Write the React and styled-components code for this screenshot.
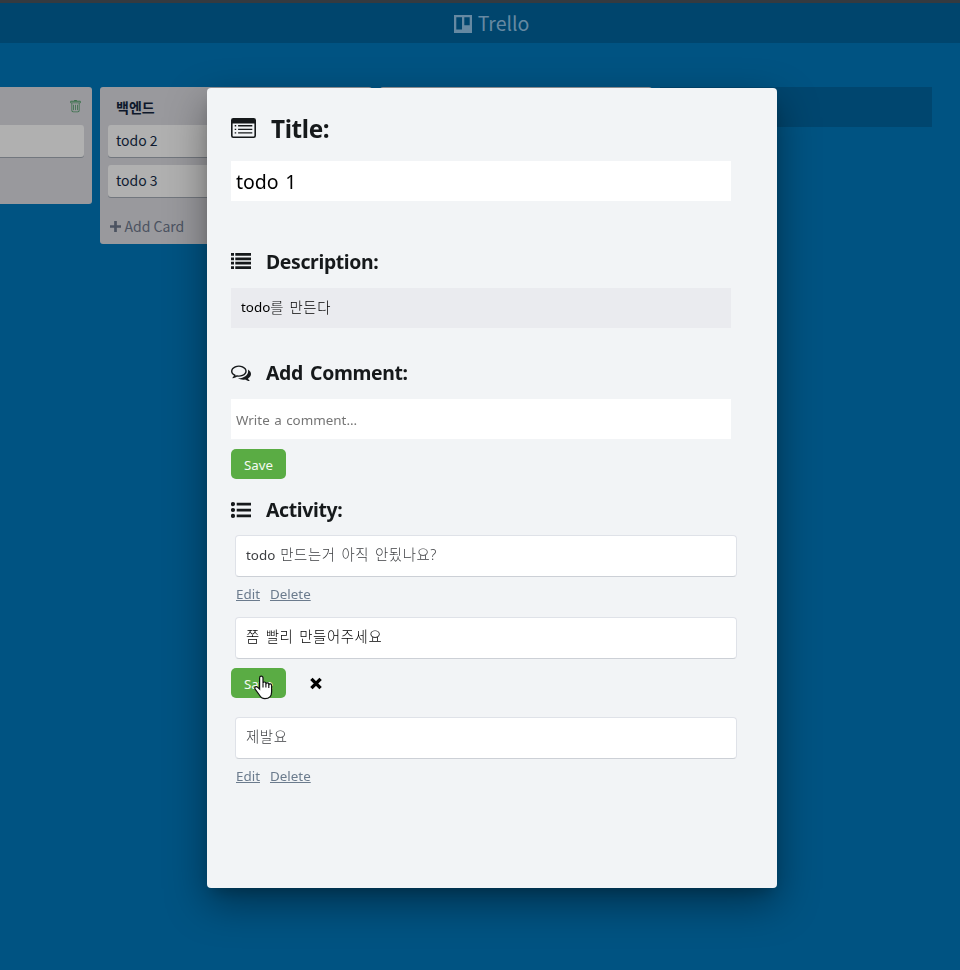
import React from "react";
import styled, { createGlobalStyle } from "styled-components";
import { BsTrash } from "react-icons/bs";

const GlobalStyle = createGlobalStyle`
  * { box-sizing: border-box; }
  html, body { margin: 0; height: 100%; }
  body {
    background: #005382;
    overflow: hidden;
    font-family: "Noto Sans CJK KR", sans-serif;
  }
  button, input { font: inherit; }
`;

const Page = styled.div`
  height: 970px;
  overflow: hidden;
  background: #005382;
  border-top: 3px solid #343a40;
`;

const TopBar = styled.header`
  height: 40px;
  display: flex;
  align-items: center;
  justify-content: center;
  gap: 6px;
  padding: 1px 0 0 23px;
  background: #00456d;
  color: #6689a2;
`;

const Brand = styled.span`
  font: 400 19.5px/22px "Noto Sans CJK KR", sans-serif;
  padding-bottom: 1px;
`;

const Board = styled.main`
  display: flex;
  align-items: flex-start;
  gap: 8px;
  margin: 44px 0 0 -180px;
`;

const List = styled.section`
  flex: 0 0 272px;
  padding: 8px;
  border-radius: 3px;
  background: #99999d;
`;

const ListHeader = styled.div`
  display: flex;
  align-items: center;
  justify-content: space-between;
  height: 30px;
  padding: 0 2px 8px 8px;
  font-size: 14px;
  color: #0e182b;
  svg { margin-top: 1px; color: #39704a; }
`;

const ListTitle = styled.span`
  font-weight: 700;
  line-height: 22px;
  padding-top: 2px;
`;

const Card = styled.div`
  height: 32px;
  margin-bottom: 8px;
  padding: 0 8px;
  border-radius: 3px;
  background: #b0b0b0;
  box-shadow: 0 1px 0 #72777e;
  color: #0f1b31;
  font-size: 14px;
  line-height: 30px;
`;

const AddCard = styled.div`
  display: flex;
  align-items: center;
  gap: 3.5px;
  height: 31px;
  padding: 11px 2px 0;
  color: #4c5361;
  font-size: 14px;
  line-height: 20px;
`;

const AddList = styled.div`
  flex: 0 0 272px;
  height: 40px;
  background: #00466f;
`;

const Overlay = styled.div`
  position: fixed;
  inset: 0;
  display: flex;
  align-items: flex-start;
  padding: 88px 0 0 207px;
`;

const Modal = styled.div`
  width: 570px;
  height: 800px;
  padding: 24px;
  border-radius: 4px;
  background: #f2f4f6;
  box-shadow: 0 15px 42px rgba(0, 0, 0, 0.4), 0 8px 14px -5px rgba(0, 0, 0, 0.2);
  color: #16191b;
  font-family: "Noto Sans", "Noto Sans CJK KR", sans-serif;
`;

const Heading = styled.h2`
  display: flex;
  align-items: center;
  gap: 15px;
  height: ${(p) => p.$height || 26}px;
  margin: ${(p) => p.$top || 0}px 0 0;
  font-size: ${(p) => p.$size || 19.4}px;
  font-weight: 700;
  letter-spacing: -0.35px;
  line-height: 26px;
  word-spacing: 2.5px;
  svg { flex: none; }
`;

const HeadingText = styled.span`
  padding-top: ${(p) => p.$drop || 0}px;
`;

const Field = styled.div`
  display: flex;
  align-items: center;
  width: 500px;
  height: 40px;
  margin-top: ${(p) => p.$top}px;
  padding: ${(p) => p.$drop || 0}px ${(p) => p.$pad || 5}px ${(p) => p.$lift || 0}px;
  background: ${(p) => p.$bg || "#fff"};
  color: ${(p) => p.$color || "#000"};
  font-size: ${(p) => p.$size || 13.4}px;
  white-space: pre;
  word-spacing: ${(p) => p.$word || 1}px;
`;

const Hangul = styled.span`
  font-size: 14.4px;
  font-weight: 300;
  letter-spacing: 0.6px;
`;

const SaveButton = styled.button`
  width: 55px;
  height: 30px;
  padding: 2px 0 0;
  border: 0;
  border-radius: 5px;
  background: #5aac44;
  color: #f4faf2;
  font-size: 13.3px;
  line-height: 20px;
`;

const SaveRow = styled.div`
  position: relative;
  display: flex;
  align-items: center;
  gap: 24px;
  height: 30px;
  margin-top: ${(p) => p.$top}px;
`;

const Cursor = styled.svg`
  position: absolute;
  left: 23px;
  top: 7px;
`;

const Comment = styled.div`
  width: 502px;
  height: 42px;
  margin: ${(p) => p.$top}px 0 0 4px;
  padding: 0 10px;
  border: 1px solid #dfe2e8;
  border-bottom-color: #ccd0d6;
  border-radius: 4px;
  background: #fff;
  color: ${(p) => (p.$active ? "#000" : "#3c3e41")};
  font-size: 13.4px;
  line-height: 37px;
  word-spacing: 1.5px;
`;

const Links = styled.div`
  display: flex;
  gap: 10px;
  margin: 7px 0 0 5px;
  height: 20px;
  color: #6b7b8d;
  font-size: 13.4px;
  line-height: 20px;
  text-decoration: underline;
`;

const TrelloIcon = () => (
  <svg width="18" height="18" viewBox="0 0 18 18">
    <path fill="currentColor" fillRule="evenodd" d="M0 0h18v18H0zM2.3 2.3v12.2h5.7v-12.2zM10.3 2.3v8h5.4V2.3z" />
  </svg>
);

const PlusIcon = () => (
  <svg width="11" height="11" viewBox="0 0 11 11">
    <path d="M5.5 0v11M0 5.5h11" stroke="currentColor" strokeWidth="2.7" />
  </svg>
);

const CardIcon = () => (
  <svg width="25" height="20" viewBox="0 0 25 20">
    <path
      fill="currentColor"
      fillRule="evenodd"
      d="M2.3 0h20.4A2.3 2.3 0 0 1 25 2.3v15.4a2.3 2.3 0 0 1-2.3 2.3H2.3A2.3 2.3 0 0 1 0 17.7V2.3A2.3 2.3 0 0 1 2.3 0zM1.6 5.4v12c0 .6.4 1 1 1h19.8c.6 0 1-.4 1-1v-12z"
    />
    <path fill="currentColor" d="M3.7 7.1h1.5v1.4H3.7zM3.7 10.7h1.5v1.4H3.7zM3.7 14.2h1.5v1.4H3.7zM7.1 7.1h14.2v1.4H7.1zM7.1 10.7h14.2v1.4H7.1zM7.1 14.2h14.2v1.4H7.1z" />
  </svg>
);

const ListIcon = () => (
  <svg width="20" height="16" viewBox="0 0 20 16">
    <path fill="currentColor" d="M0 0h3v2.8H0zM0 4.4h3v2.8H0zM0 8.8h3v2.8H0zM0 13.2h3V16H0zM4.3 0H20v2.8H4.3zM4.3 4.4H20v2.8H4.3zM4.3 8.8H20v2.8H4.3zM4.3 13.2H20V16H4.3z" />
  </svg>
);

const BulletsIcon = () => (
  <svg width="20" height="16" viewBox="0 0 20 16">
    <circle cx="2" cy="2.1" r="2.1" fill="currentColor" />
    <circle cx="2" cy="8" r="2.1" fill="currentColor" />
    <circle cx="2" cy="13.9" r="2.1" fill="currentColor" />
    <path fill="currentColor" d="M5.7.8H20v2.7H5.7zM5.7 6.7H20v2.7H5.7zM5.7 12.5H20v2.7H5.7z" />
  </svg>
);

const CommentsIcon = () => (
  <svg width="20" height="16" viewBox="0 0 1792 1434">
    <path
      transform="translate(0 -90)"
      fill="currentColor"
      d="M704 256q-153 0-286 52t-211.500 141T128 640q0 82 53 158t149 132l97 56-35 84q34-20 62-39l44-31 53 10q78 14 153 14 153 0 286-52t211.500-141T1280 640t-78.500-191T990 308t-286-52zm0-128q191 0 353.500 68.500T1314 383t94 257-94 257-256.500 186.500T704 1152q-86 0-176-16-124 88-278 128-36 9-86 16h-3q-11 0-20.500-8t-11.500-21q-1-3-1-6.500t.5-6.500 2-6l2.500-5 3.500-5.500 4-5 4.500-5 4-4.500q5-6 23-25t26-29.500 22.500-29 25-38.500 20.500-44q-124-72-195-177T0 640q0-139 94-257t256.500-186.500T704 128zm822 1169q10 24 20.500 44t25 38.500 22.500 29 26 29.500 23 25q1 1 4 4.500t4.500 5 4 5 3.500 5.500l2.500 5 2 6 .5 6.500-1 6.500q-3 14-13 22t-22 7q-50-7-86-16-154-40-278-128-90 16-176 16-271 0-472-132 58 4 88 4 161 0 309-45t264-129q125-92 192-212t67-254q0-77-23-152 129 71 204 178t75 230q0 120-71 224.500T1526 1297z"
    />
  </svg>
);

const CloseIcon = () => (
  <svg width="12" height="13" viewBox="0 0 12 13">
    <path d="M1.4 1.900l9.200 9.200M10.6 1.900l-9.200 9.200" stroke="#000" strokeWidth="3.400" />
  </svg>
);

const HandCursor = () => (
  <Cursor width="20" height="25" viewBox="0 0 20 25">
    <path
      d="M7.3 1.200c-1 0-1.700.7-1.700 1.700v11.200L3.7 12.300c-.8-.8-1.900-.8-2.500-.2-.6.600-.5 1.500.1 2.300l3.900 5.300c1.400 2.600 3 3.900 5.700 3.900 4.400 0 6.700-2.800 6.700-6.700V10.400c0-1-.6-1.500-1.400-1.500s-1.400.5-1.400 1.300v-.8c0-1-.6-1.600-1.400-1.600s-1.500.6-1.500 1.400v-.6c0-1-.6-1.600-1.400-1.600S9 7.600 9 8.600V2.900c0-1-.7-1.700-1.700-1.700z"
      fill="#fff"
      stroke="#111"
      strokeWidth="1.200"
    />
    <path d="M9 8.400v4.200M11.900 9v3.600M14.8 10v3" stroke="#111" strokeWidth="1.100" />
  </Cursor>
);

const CommentLinks = () => (
  <Links>
    <span>Edit</span>
    <span>Delete</span>
  </Links>
);

export default function App() {
  return (
    <>
      <GlobalStyle />
      <Page>
        <TopBar>
          <TrelloIcon />
          <Brand>Trello</Brand>
        </TopBar>
        <Board>
          <List>
            <ListHeader>
              <ListTitle />
              <BsTrash size={13} />
            </ListHeader>
            <Card />
            <AddCard />
          </List>
          <List>
            <ListHeader>
              <ListTitle>백엔드</ListTitle>
            </ListHeader>
            <Card>todo 2</Card>
            <Card>todo 3</Card>
            <AddCard>
              <PlusIcon />
              Add Card
            </AddCard>
          </List>
          <List>
            <ListHeader />
            <AddCard />
          </List>
          <AddList />
        </Board>
      </Page>
      <Overlay>
        <Modal>
          <Heading $size={24.3} $height={32}>
            <CardIcon />
            <HeadingText $drop={2}>Title:</HeadingText>
          </Heading>
          <Field $top={17} $size={19.5} $word={1.5}>todo 1</Field>
          <Heading $top={47}>
            <ListIcon />
            <HeadingText $drop={2}>Description:</HeadingText>
          </Heading>
          <Field $top={14} $pad={10} $lift={3} $bg="#eaebef">
            todo<Hangul>를 만든다</Hangul>
          </Field>
          <Heading $top={32}>
            <CommentsIcon />
            <HeadingText>Add Comment:</HeadingText>
          </Heading>
          <Field $top={13} $drop={2} $color="#757575">Write a comment...</Field>
          <SaveRow $top={10}>
            <SaveButton>Save</SaveButton>
          </SaveRow>
          <Heading $top={18}>
            <BulletsIcon />
            <HeadingText>Activity:</HeadingText>
          </Heading>
          <Comment $top={12}>
            todo <Hangul>만드는거 아직 안됬나요?</Hangul>
          </Comment>
          <CommentLinks />
          <Comment $top={13} $active>
            <Hangul>쫌 빨리 만들어주세요</Hangul>
          </Comment>
          <SaveRow $top={9}>
            <SaveButton>Save</SaveButton>
            <CloseIcon />
            <HandCursor />
          </SaveRow>
          <Comment $top={19}>
            <Hangul>제발요</Hangul>
          </Comment>
          <CommentLinks />
        </Modal>
      </Overlay>
    </>
  );
}
